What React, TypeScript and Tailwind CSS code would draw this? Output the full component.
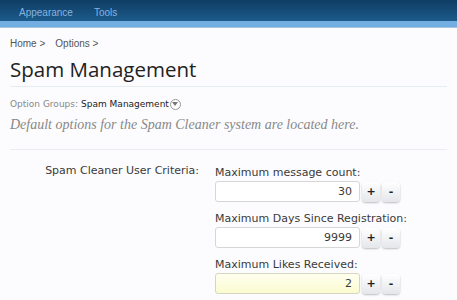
export default function App() {
  const fields = [
    { label: "Maximum message count:", value: "30", focus: false },
    { label: "Maximum Days Since Registration:", value: "9999", focus: false },
    { label: "Maximum Likes Received:", value: "2", focus: true },
  ];

  return (
    <div className="h-[300px] w-[457px] overflow-hidden bg-[#fcfcfe]">
      {/* top navigation */}
      <div className="h-[21px] bg-gradient-to-b from-[#0f3d63] to-[#1c5b8c] flex items-end gap-[21px] pl-[19px] pb-[1px] font-['Liberation_Sans',sans-serif] text-[10px] text-[#86b4e0]">
        <span>Appearance</span>
        <span>Tools</span>
      </div>
      <div className="h-[7px] bg-[#72aee2] border-b border-[#a9c3d8]" />

      <div className="px-[10px]">
        <div className="mt-[8px] font-['Liberation_Sans',sans-serif] text-[10px] text-[#555] flex gap-[10px]">
          <span>Home &gt;</span>
          <span>Options &gt;</span>
        </div>
        <h1 className="mt-[3px] font-['Open_Sans',sans-serif] text-[20.5px] leading-[30px] text-[#222]">
          Spam Management
        </h1>
        <div className="mt-[2px] border-t border-[#e4eef0]" />
        <div className="mt-[10px] flex items-center font-['DejaVu_Sans',sans-serif] text-[9px] leading-[14px] text-[#888]">
          <span>Option Groups:</span>
          <span className="ml-[3px] text-[#222]">Spam Management</span>
          <span className="ml-[1px] grid h-[11px] w-[11px] place-items-center rounded-full border border-[#999] bg-white">
            <svg width="6" height="4" viewBox="0 0 6 4">
              <path d="M0 0h6L3 4z" fill="#777" />
            </svg>
          </span>
        </div>
        <p className="mt-[3px] font-['Liberation_Serif',serif] italic text-[14px] text-[#888]">
          Default options for the Spam Cleaner system are located here.
        </p>
        <div className="mt-[14px] border-t border-[#eaeef2]" />

        <div className="mt-[14px] flex font-['DejaVu_Sans',sans-serif] text-[11px] text-[#3a3a3a]">
          <div className="w-[189px] text-right leading-[14px]">Spam Cleaner User Criteria:</div>
          <div className="ml-[16px] pt-[2px] flex flex-col gap-[10px]">
            {fields.map((f) => (
              <div key={f.label}>
                <div className="leading-[14px]">{f.label}</div>
                <div className="mt-[1px] flex items-center gap-[2px]">
                  <div
                    className={
                      f.focus
                        ? "h-[21px] w-[145px] rounded-[3px] border border-[#d5d5c0] bg-gradient-to-b from-[#fffff0] to-[#fbfbd0] pr-[7px] text-right leading-[19px]"
                        : "h-[21px] w-[145px] rounded-[3px] border border-[#d6d6d6] bg-white pr-[7px] text-right leading-[19px]"
                    }
                  >
                    {f.value}
                  </div>
                  <button className="h-[20px] w-[18px] rounded-[4px] bg-gradient-to-b from-white to-[#e4e6ea] text-[11px] font-bold leading-[20px] text-[#222] shadow-[0_1px_2px_rgba(0,0,0,0.25)]">
                    +
                  </button>
                  <button className="h-[20px] w-[18px] rounded-[4px] bg-gradient-to-b from-white to-[#e4e6ea] text-[11px] font-bold leading-[20px] text-[#222] shadow-[0_1px_2px_rgba(0,0,0,0.25)]">
                    -
                  </button>
                </div>
              </div>
            ))}
          </div>
        </div>
      </div>
    </div>
  );
}
